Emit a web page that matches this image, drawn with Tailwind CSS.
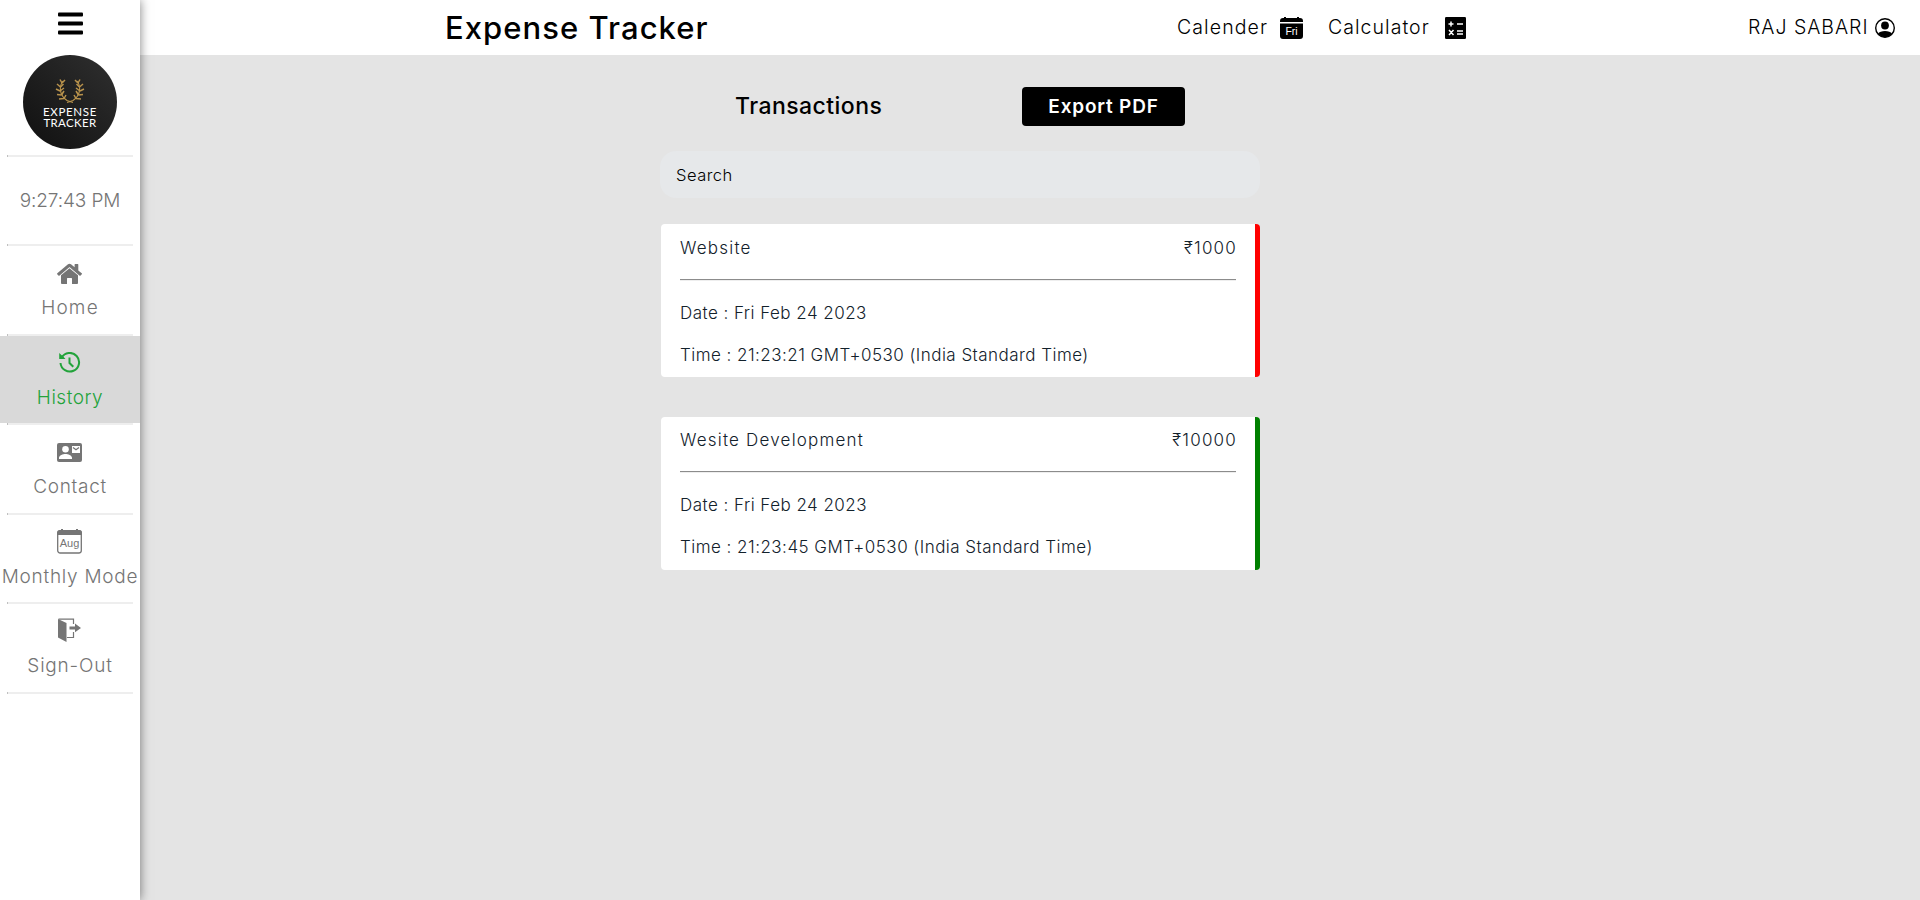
<!DOCTYPE html>
<html lang="en">
<head>
<meta charset="utf-8">
<title>Expense Tracker</title>
<script src="https://cdn.jsdelivr.net/npm/@tailwindcss/browser@4"></script>
</head>
<body class="h-[900px] w-[1920px] overflow-hidden bg-[#e4e4e4] font-['Inter','Liberation_Sans',sans-serif] text-black">
<div class="flex h-full">
  <aside class="z-10 flex h-full w-[140px] shrink-0 flex-col items-center whitespace-nowrap bg-white text-[19px] font-light leading-6 text-[#757575] shadow-[0_0_10px_rgba(0,0,0,0.5)]">
    <svg class="mt-3 h-[23px] w-[25px] shrink-0" viewBox="0 0 25 23" fill="#000"><rect y="0.5" width="25" height="4" rx="1"/><rect y="9.5" width="25" height="4" rx="1"/><rect y="18.5" width="25" height="4" rx="1"/></svg>
    <div class="mt-5 flex h-[94px] w-[94px] shrink-0 flex-col items-center rounded-full bg-linear-to-tr from-[#101010] to-[#303030] pt-[22px] text-[11.5px] font-normal leading-[11px] text-white">
      <svg class="h-[27px] w-[30px] shrink-0" viewBox="0 0 30 27" fill="none" stroke="#b8924c" stroke-width="1.100"><path d="M8 4C4 9 4 18 12 23.500l6 2M22 4c4 5 4 14-4 19.500l-6 2"/><path stroke-width="1.500" d="M7 6 5 2.500M7 6l3-3M5.500 10 2 7M5.500 10l3-3M5 14l-4-2M5 14l4-3M6.500 18 2 17.500M6.500 18l2.500-4M9 21.500l-5 .5M9 21.500l2-3.500M23 6l2-3.500M23 6l-3-3M24.500 10 28 7M24.500 10l-3-3M25 14l4-2M25 14l-4-3M23.500 18l4.500-.5M23.500 18 21 14M21 21.500l5 .5M21 21.500 19 18"/></svg>
      <span class="mt-[2px] font-['Lato'] tracking-[0.65px]">EXPENSE</span>
      <span class="font-['Lato'] tracking-[0.35px]">TRACKER</span>
    </div>
    <div class="mt-[6px] h-[2px] w-[126px] shrink-0 border-l border-[#c0c0c0] bg-[#eee]"></div>
    <div class="flex h-[87px] shrink-0 items-center"><span class="tracking-[-0.1px]">9:27:43 PM</span></div>
    <div class="h-[2px] w-[126px] shrink-0 border-l border-[#c0c0c0] bg-[#eee]"></div>
    <div class="flex h-[88px] w-full shrink-0 flex-col items-center pt-[17px]">
      <svg class="h-[22px] w-[26px]" viewBox="0 0 26 22" fill="#757575"><path d="M12.5 5.2 4 12.3V20c0 .6.3.9.9.9H10v-5.4c0-.4.2-.6.6-.6h3.8c.4 0 .6.2.6.6v5.4h5.100c.6 0 .9-.3.9-.9v-7.700zM25 10.500l-3.700-3.100V1.600c0-.4-.2-.6-.6-.6h-2.500c-.4 0-.6.2-.6.6v2.700L14 1.300c-.9-.7-2.100-.7-3 0L.3 10.300c-.3.2-.3.600-.1.900l1.200 1.400c.2.300.6.300.9.100l9.700-8.100c.3-.3.700-.3 1 0l9.700 8.100c.3.200.6.200.9-.1l1.200-1.400c.3-.3.300-.5.200-.7z"/></svg>
      <span class="mt-[11px] tracking-[1.2px]">Home</span>
    </div>
    <div class="h-[2px] w-[126px] shrink-0 border-l border-[#c0c0c0] bg-[#eee]"></div>
    <div class="flex h-[87px] w-full shrink-0 flex-col items-center bg-[#d9d9d9] pt-4 text-[#23a33b]">
      <svg class="mr-px h-[22px] w-[22px]" viewBox="0 0 22 22" fill="none" stroke="#23a33b"><path stroke-width="2" d="M2.600 5.800A9.300 9.300 0 1 1 1.500 11"/><path stroke-width="2" d="M10.500 5.500V11l3.800 3.800"/><path fill="#23a33b" stroke="none" d="M.2.900 2.400 3 4.200 4.500 6.500 7H.2z"/></svg>
      <span class="mt-[12px] tracking-[0.5px]">History</span>
    </div>
    <div class="h-[2px] w-[126px] shrink-0 border-l border-[#c0c0c0] bg-[#eee]"></div>
    <div class="flex h-[88px] w-full shrink-0 flex-col items-center pt-[18px]">
      <svg class="mr-px h-[19px] w-[25px]" viewBox="0 0 25 19"><rect width="25" height="19" rx="2" fill="#757575"/><circle cx="8.500" cy="6.300" r="3.300" fill="#fff"/><path fill="#fff" d="M2 16v-1.200c0-2.300 4-3.800 6.500-3.800s6.500 1.500 6.500 3.800V16zM15 3h8v7h-8z"/><path d="m16 4.500 3 2.300 3-2.300" fill="none" stroke="#757575" stroke-width="1.200"/></svg>
      <span class="mt-[13px] tracking-[0.7px]">Contact</span>
    </div>
    <div class="h-[2px] w-[126px] shrink-0 border-l border-[#c0c0c0] bg-[#eee]"></div>
    <div class="flex h-[87px] w-full shrink-0 flex-col items-center pt-[14px]">
      <svg class="mr-px h-[25px] w-[25px]" viewBox="0 0 25 25"><rect x=".7" y="1.700" width="23.600" height="22.300" rx="2.500" fill="none" stroke="#757575" stroke-width="1.300"/><path fill="#757575" d="M0 6V4c0-2 1-3 3-3h1V0h2v1h13V0h2v1h1c2 0 3 1 3 3v2z"/><text x="12.500" y="17.500" text-anchor="middle" font-family="Liberation Sans" font-size="11" fill="#757575">Aug</text></svg>
      <span class="mt-[11px] tracking-[0.75px]">Monthly Mode</span>
    </div>
    <div class="h-[2px] w-[126px] shrink-0 border-l border-[#c0c0c0] bg-[#eee]"></div>
    <div class="flex h-[88px] w-full shrink-0 flex-col items-center pt-[14px]">
      <svg class="mr-px h-[25px] w-[25px]" viewBox="0 0 25 25"><path fill="#757575" d="m1 1 8.500 4v19L1 19.500zM12.500 8.500H18V5.500l6 4.500-6 4.300V11.500h-5.500z"/><path d="M1.500 1.200h15V6M16.500 14v5.500H10" fill="none" stroke="#757575" stroke-width="1.200"/></svg>
      <span class="mt-[11px] tracking-[0.8px]">Sign-Out</span>
    </div>
    <div class="h-[2px] w-[126px] shrink-0 border-l border-[#c0c0c0] bg-[#eee]"></div>
  </aside>
  <div class="flex min-w-0 flex-1 flex-col">
    <header class="flex h-[55px] shrink-0 items-center whitespace-nowrap bg-white text-[19.5px] font-light">
      <h1 class="ml-[305px] w-[264px] pb-px text-[31px] font-medium leading-[53px] tracking-[1.05px]">Expense Tracker</h1>
      <span class="ml-[468px] w-[92px] tracking-[1.1px]">Calender</span>
      <svg class="ml-[11px] h-[22px] w-[23px]" viewBox="0 0 23 22"><path d="M0 5V4c0-2 1-3 3-3h1V0h2v1h11V0h2v1h1c2 0 3 1 3 3v1zM0 6.500h23V19c0 2-1 3-3 3H3c-2 0-3-1-3-3z"/><text x="11.500" y="17.500" text-anchor="middle" font-family="Liberation Sans" font-size="10.500" fill="#fff">Fri</text></svg>
      <span class="ml-[25px] w-[102px] tracking-[1.04px]">Calculator</span>
      <svg class="ml-[15px] h-[22px] w-[21px]" viewBox="0 0 21 22"><rect width="21" height="22" rx="1.200"/><path d="M3.500 7h5M6 4.500v5M12 7h6M12 14h6M12 17h6M4 13l4.500 5M8.500 13 4 18" stroke="#fff" stroke-width="1.500"/></svg>
      <span class="ml-[282px] w-[121px] tracking-[0.98px]">RAJ SABARI</span>
      <svg class="ml-[6px] h-5 w-5" viewBox="0 0 20 20"><circle cx="10" cy="10" r="9.300" fill="none" stroke="#000" stroke-width="1.400"/><circle cx="10" cy="7.500" r="3.900"/><path d="M3 15.500c2-3.500 12-3.500 14 0-3.500 5-10.500 5-14 0z"/></svg>
    </header>
    <main class="ml-[520px] flex w-[600px] flex-col whitespace-nowrap">
      <div class="mt-[32px] flex h-[39px] items-center">
        <h2 class="ml-[75px] w-[148px] text-[23px] font-medium tracking-[0.45px]">Transactions</h2>
        <div class="ml-[139px] flex h-[39px] w-[163px] items-center justify-center rounded bg-black pt-px text-white"><span class="text-[19px] font-semibold tracking-[0.8px]">Export PDF</span></div>
      </div>
      <div class="mt-[25px] flex h-[47px] items-center rounded-2xl bg-[#e6e8ea] px-4 pt-px text-[16.500px] font-light tracking-[0.5px]">Search</div>
      <section class="mt-[26px] ml-px h-[153px] rounded-[4px] border-r-[5px] border-[#f00] bg-white pl-[19px] pr-[19px] pt-[12px] text-[17px] font-light leading-6 tracking-[0.46px] text-[#12212b]">
        <div class="flex h-6 justify-between tracking-[1.2px]"><span>Website</span><span class="-mr-px">₹1000</span></div>
        <div class="mt-[19px] h-[2px] border-t border-[#8c8c8c] bg-[#eee]"></div>
        <p class="mt-[20px]">Date : Fri Feb 24 2023</p>
        <p class="mt-[18px]">Time : 21:23:21 GMT+0530 (India Standard Time)</p>
      </section>
      <section class="mt-10 ml-px h-[153px] rounded-[4px] border-r-[5px] border-[#008000] bg-white pl-[19px] pr-[19px] pt-[11px] text-[17px] font-light leading-6 tracking-[0.47px] text-[#12212b]">
        <div class="flex h-6 justify-between tracking-[1.2px]"><span>Wesite Development</span><span class="-mr-px">₹10000</span></div>
        <div class="mt-[19px] h-[2px] border-t border-[#8c8c8c] bg-[#eee]"></div>
        <p class="mt-[20px]">Date : Fri Feb 24 2023</p>
        <p class="mt-[18px]">Time : 21:23:45 GMT+0530 (India Standard Time)</p>
      </section>
    </main>
  </div>
</div>
</body>
</html>
